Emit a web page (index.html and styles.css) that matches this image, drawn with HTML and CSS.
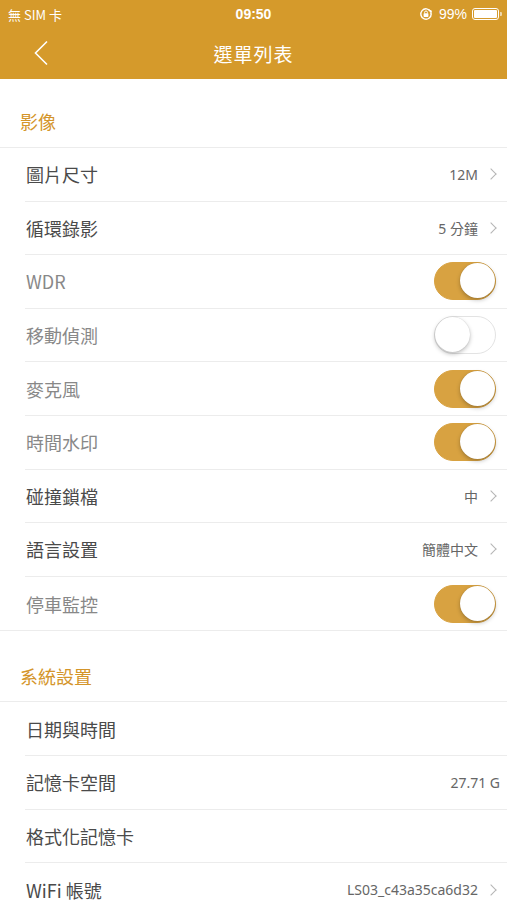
FILE: index.html
```html
<!DOCTYPE html>
<html lang="zh-Hant">
<head>
    <meta charset="UTF-8">
    <meta name="viewport" content="width=device-width, initial-scale=1.0">
    <title>選單列表</title>
    <link rel="stylesheet" href="styles.css">
</head>
<body>

    <div class="top">
        <div class="status-bar">
            <span class="carrier">無 SIM 卡</span>
            <span class="clock">09:50</span>
            <span class="status-right">
                <svg class="lock-icon" width="14" height="14" viewBox="0 0 14 14">
                    <path d="M11.6 4.6A5.2 5.2 0 1 0 12.2 7" fill="none" stroke="#fff" stroke-width="1.4" stroke-linecap="round"/>
                    <path d="M10 3.2l2.2 0.9-0.3 2.4" fill="none" stroke="#fff" stroke-width="1.3" stroke-linecap="round" stroke-linejoin="round"/>
                    <rect x="4.6" y="6.3" width="4.8" height="3.6" rx="0.6" fill="#fff"/>
                    <path d="M5.6 6.4V5.4a1.4 1.4 0 0 1 2.8 0v1" fill="none" stroke="#fff" stroke-width="1"/>
                </svg>
                <span class="battery-text">99%</span>
                <span class="battery"><span class="battery-fill"></span></span>
            </span>
        </div>
        <div class="nav-bar">
            <svg class="back" width="16" height="26" viewBox="0 0 16 26">
                <path d="M14 1.5L2.5 13 14 24.5" fill="none" stroke="#fff" stroke-width="1.6"/>
            </svg>
            <h1 class="nav-title">選單列表</h1>
        </div>
    </div>

    <div class="section-head">影像</div>
    <ul class="list">
        <li class="row"><span class="label">圖片尺寸</span><span class="value">12M</span><span class="chev"></span></li>
        <li class="row"><span class="label">循環錄影</span><span class="value">5 分鐘</span><span class="chev"></span></li>
        <li class="row switch-row"><span class="label">WDR</span><span class="toggle on"></span></li>
        <li class="row switch-row"><span class="label">移動偵測</span><span class="toggle"></span></li>
        <li class="row switch-row"><span class="label">麥克風</span><span class="toggle on"></span></li>
        <li class="row switch-row"><span class="label">時間水印</span><span class="toggle on"></span></li>
        <li class="row"><span class="label">碰撞鎖檔</span><span class="value">中</span><span class="chev"></span></li>
        <li class="row"><span class="label">語言設置</span><span class="value">簡體中文</span><span class="chev"></span></li>
        <li class="row switch-row"><span class="label">停車監控</span><span class="toggle on"></span></li>
    </ul>

    <div class="section-head second">系統設置</div>
    <ul class="list">
        <li class="row"><span class="label">日期與時間</span></li>
        <li class="row"><span class="label">記憶卡空間</span><span class="value plain">27.71 G</span></li>
        <li class="row"><span class="label">格式化記憶卡</span></li>
        <li class="row"><span class="label">WiFi 帳號</span><span class="value">LS03_c43a35ca6d32</span><span class="chev"></span></li>
    </ul>

</body>
</html>
```

FILE: styles.css
```css
body {
    margin: 0;
    padding: 0;
    background: #fff;
    font-family: "Noto Sans CJK TC", "Noto Sans", sans-serif;
    color: #444;
}
.top { background: #d59a2b; color: #fff; }
.status-bar {
    height: 28px;
    display: flex;
    align-items: center;
    justify-content: space-between;
    padding: 0 5px 0 8px;
    font-family: "Liberation Sans", "Noto Sans CJK TC", sans-serif;
    font-size: 14px;
    position: relative;
}
.carrier { font-family: "Noto Sans CJK TC", sans-serif; font-size: 13px; }
.clock {
    position: absolute;
    left: 0; right: 0;
    text-align: center;
    font-weight: bold;
    font-size: 14px;
    pointer-events: none;
}
.status-right { display: flex; align-items: center; gap: 5px; }
.battery-text { font-size: 14px; margin-left: 1px; }
.battery {
    width: 27px; height: 12px;
    border: 1px solid #fff;
    border-radius: 3px;
    padding: 1px;
    box-sizing: border-box;
    position: relative;
    margin-right: 3px;
}
.battery::after {
    content: "";
    position: absolute;
    right: -4px; top: 3px;
    width: 2px; height: 4px;
    background: rgba(255,255,255,0.6);
    border-radius: 0 1px 1px 0;
}
.battery-fill { display: block; width: 100%; height: 100%; background: #fff; border-radius: 1px; }
.nav-bar {
    height: 51px;
    display: flex;
    align-items: center;
    justify-content: center;
    position: relative;
}
.back { position: absolute; left: 33px; top: 12px; }
.nav-title { margin: 0; font-size: 19px; font-weight: normal; letter-spacing: 1px; }

.section-head {
    height: 69px;
    box-sizing: border-box;
    padding: 0 20px 13px;
    display: flex;
    align-items: flex-end;
    color: #d4952a;
    font-size: 18px;
    border-bottom: 1px solid #ececec;
}
.section-head.second { height: 71px; padding-bottom: 12px; }
.list { list-style: none; margin: 0; padding: 0; border-bottom: 1px solid #ececec; }
.row {
    height: 53.6px;
    box-sizing: border-box;
    margin-left: 25px;
    padding-right: 9px;
    display: flex;
    align-items: center;
    border-bottom: 1px solid #ececec;
}
.row:last-child { border-bottom: none; }
.label { flex: 1; font-size: 18px; color: #4a4a4a; padding-left: 1px; }
.switch-row .label { color: #888; }
.value { font-size: 14px; color: #666; font-family: "Noto Sans", "Noto Sans CJK TC", sans-serif; }
.value.plain { margin-right: -2px; }
.chev {
    width: 7px; height: 7px;
    border-top: 1.2px solid #b5b5b5;
    border-right: 1.2px solid #b5b5b5;
    transform: rotate(45deg);
    margin: 0 3px 0 9px;
}
.toggle {
    width: 62px; height: 38px;
    box-sizing: border-box;
    border-radius: 19px;
    border: 1.5px solid #e3e3e3;
    background: #fff;
    position: relative;
    margin-right: 2px;
}
.toggle::after {
    content: "";
    position: absolute;
    top: 0; left: 0;
    width: 35px; height: 35px;
    border-radius: 50%;
    background: #fff;
    box-shadow: 0 2px 4px rgba(0,0,0,0.25), 0 0 1px rgba(0,0,0,0.2);
}
.toggle.on { background: #d8a241; border-color: #d8a241; }
.toggle.on::after { left: auto; right: 0; }
```
